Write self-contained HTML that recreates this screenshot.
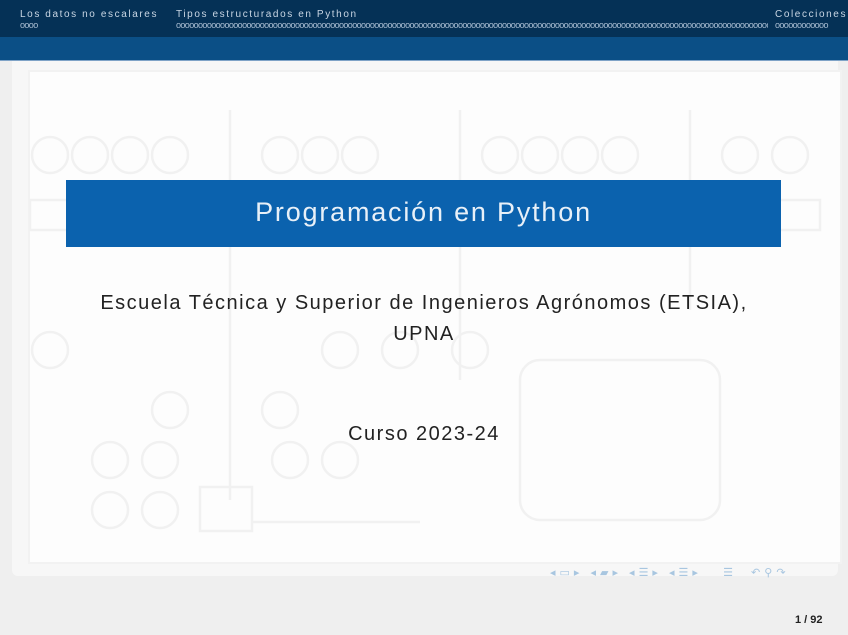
<!DOCTYPE html>
<html><head><meta charset="utf-8"><style>
html,body{margin:0;padding:0}
body{width:848px;height:635px;position:relative;overflow:hidden;background:#efefef;font-family:"Liberation Sans",sans-serif}
.top{position:absolute;left:0;top:0;width:848px;height:37px;background:#053156}
.bar2{position:absolute;left:0;top:37px;width:848px;height:23px;background:#0b4f86;border-bottom:1px solid #7fa3c7}
.nav{position:absolute;color:#c9d6e4;font-size:10px;letter-spacing:1.6px;top:9px;white-space:nowrap}
.dots{position:absolute;color:#a9bdd2;font-size:9px;top:20px;letter-spacing:-0.6px;white-space:nowrap;overflow:hidden}
.frame{position:absolute;left:12px;top:61px;width:826px;height:515px;background:#f7f7f7;border-radius:0 0 6px 6px}
.inner{position:absolute;left:28px;top:70px;width:810px;height:490px;background:#fdfdfd;border:2px solid #f2f2f2}
.title{position:absolute;left:66px;top:180px;width:715px;height:67px;background:#0b62ae;color:#e8f0f8;font-size:27px;letter-spacing:1.8px;text-align:center;line-height:64px}
.t{position:absolute;left:0;width:848px;text-align:center;color:#222;font-size:20px;letter-spacing:1.5px}
</style></head><body>
<div class="top"></div><div class="bar2"></div>
<div class="nav" style="left:20px">Los datos no escalares</div>
<div class="nav" style="left:176px">Tipos estructurados en Python</div>
<div class="nav" style="left:775px">Colecciones</div>
<div class="dots" style="left:20px;width:40px">oooo</div>
<div class="dots" style="left:176px;width:592px">oooooooooooooooooooooooooooooooooooooooooooooooooooooooooooooooooooooooooooooooooooooooooooooooooooooooooooooooooooooooooooooooooooooooooooooooooooooooooooooooo</div>
<div class="dots" style="left:775px;width:73px">oooooooooooo</div>
<div class="frame"></div>
<div class="inner"></div>
<svg style="position:absolute;left:0;top:60px" width="848" height="520" fill="none" stroke="#f1f1f1" stroke-width="2.5">
<g>
<circle cx="50" cy="95" r="18"/><circle cx="90" cy="95" r="18"/><circle cx="130" cy="95" r="18"/><circle cx="170" cy="95" r="18"/>
<circle cx="280" cy="95" r="18"/><circle cx="320" cy="95" r="18"/><circle cx="360" cy="95" r="18"/>
<circle cx="500" cy="95" r="18"/><circle cx="540" cy="95" r="18"/><circle cx="580" cy="95" r="18"/><circle cx="620" cy="95" r="18"/>
<circle cx="740" cy="95" r="18"/><circle cx="790" cy="95" r="18"/>
<circle cx="170" cy="350" r="18"/><circle cx="280" cy="350" r="18"/><circle cx="110" cy="400" r="18"/><circle cx="160" cy="400" r="18"/>
<circle cx="110" cy="450" r="18"/><circle cx="160" cy="450" r="18"/><circle cx="290" cy="400" r="18"/><circle cx="340" cy="400" r="18"/>
<circle cx="50" cy="290" r="18"/><circle cx="340" cy="290" r="18"/><circle cx="400" cy="290" r="18"/><circle cx="470" cy="290" r="18"/>
<rect x="200" y="427" width="52" height="44"/><rect x="520" y="300" width="200" height="160" rx="20"/>
<line x1="252" y1="462" x2="420" y2="462"/><line x1="230" y1="50" x2="230" y2="440"/><line x1="460" y1="50" x2="460" y2="320"/><line x1="690" y1="50" x2="690" y2="250"/>
<rect x="30" y="140" width="790" height="30"/>
</g></svg>
<div class="title">Programación en Python</div>
<div class="t" style="top:292px">Escuela Técnica y Superior de Ingenieros Agrónomos (ETSIA),</div>
<div class="t" style="top:323px">UPNA</div>
<div class="t" style="top:423px">Curso 2023-24</div>
<div style="position:absolute;left:550px;top:566px;color:#a8c6e0;font-size:11px;letter-spacing:4px;white-space:nowrap">◂▭▸ ◂▰▸ ◂☰▸ ◂☰▸ &nbsp; ☰ &nbsp;↶⚲↷</div>
<div style="position:absolute;left:795px;top:614px;color:#222;font-size:11px;font-weight:bold">1 / 92</div>
</body></html>
